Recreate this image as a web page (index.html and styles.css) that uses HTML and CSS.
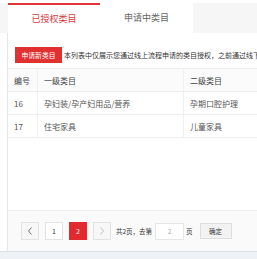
FILE: index.html
```html
<!DOCTYPE html>
<html>
<head>
<meta charset="utf-8">
<link rel="stylesheet" href="styles.css">
</head>
<body>
<div class="page">
  <div class="tabs">
    <div class="tab active">已授权类目</div>
    <div class="tab">申请中类目</div>
  </div>
  <div class="panel">
    <div class="toolbar">
      <button class="btn-apply">申请新类目</button>
      <span class="note">本列表中仅展示您通过线上流程申请的类目授权，之前通过线下申请的类目授权请联系对接人</span>
    </div>
    <table class="grid">
      <thead>
        <tr><th class="c1">编号</th><th class="c2">一级类目</th><th class="c3">二级类目</th></tr>
      </thead>
      <tbody>
        <tr><td class="c1">16</td><td class="c2">孕妇装/孕产妇用品/营养</td><td class="c3">孕期口腔护理</td></tr>
        <tr><td class="c1">17</td><td class="c2">住宅家具</td><td class="c3">儿童家具</td></tr>
      </tbody>
    </table>
    <div class="footer">
      <span class="pg arrow"><svg width="6" height="8" viewBox="0 0 6 8"><polyline points="4.5,0.5 1.5,4 4.5,7.5" fill="none" stroke="#666" stroke-width="0.9"/></svg></span>
      <span class="pg num">1</span>
      <span class="pg num cur">2</span>
      <span class="pg arrow dis"><svg width="6" height="8" viewBox="0 0 6 8"><polyline points="1.5,0.5 4.5,4 1.5,7.5" fill="none" stroke="#bbb" stroke-width="0.9"/></svg></span>
      <span class="total">共2页，去第</span>
      <span class="goto">2</span>
      <span class="unit">页</span>
      <span class="ok">确定</span>
    </div>
  </div>
</div>
</body>
</html>
```
FILE: styles.css
```css
html, body {
  margin: 0;
  padding: 0;
  overflow: hidden;
}
body {
  background: #eef1f6;
  font-family: "Noto Sans CJK SC", "Noto Sans", sans-serif;
  width: 257px;
  height: 259px;
}
.page {
  height: 252px;
  background: #fff;
  padding-top: 3px;
  box-sizing: border-box;
  border-bottom: 1px solid #dcdfe4;
  display: flex;
  flex-direction: column;
  width: 420px;
}
.tabs {
  display: flex;
  height: 30px;
  background: #f6f6f6;
  padding-left: 8px;
}
.tab {
  width: 92px;
  background: #fff;
  color: #666;
  font-size: 9px;
  text-align: center;
  line-height: 30px;
  box-sizing: border-box;
}
.tab + .tab { width: 93px; }
.tab.active {
  color: #d8383c;
  border-top: 2px solid #df3337;
  line-height: 28px;
}
.panel {
  flex: 1;
  margin-left: 7px;
  border-left: 1px solid #e6e6e6;
  display: flex;
  flex-direction: column;
}
.toolbar {
  display: flex;
  align-items: center;
  margin-top: 14px;
  padding-left: 7px;
  white-space: nowrap;
}
.btn-apply {
  height: 16px;
  width: 47px;
  padding: 0;
  border: 0;
  background: #e0302f;
  color: #fff;
  font-family: inherit;
  font-size: 6.8px;
  line-height: 16px;
}
.note {
  margin-left: 2px;
  font-size: 7px;
  color: #333;
}
.grid {
  margin-top: 5px;
  border-collapse: collapse;
  width: 410px;
  font-size: 8px;
  color: #555;
}
.grid th, .grid td {
  height: 22px;
  padding: 0 0 0 6px;
  text-align: left;
  font-weight: normal;
  border-top: 1px solid #eeeeee;
  border-bottom: 1px solid #eeeeee;
}
.grid th {
  background: #fbfbfb;
  color: #444;
}
.grid .c1 { width: 23px; }
.grid .c2 { width: 139px; border-left: 1px solid #f0f0f0; }
.grid .c3 { border-left: 1px solid #f0f0f0; }
.footer {
  margin-top: auto;
  height: 40px;
  background: #fafafa;
  border-top: 1px solid #efefef;
  display: flex;
  align-items: center;
  padding-left: 13px;
  font-size: 6.5px;
  color: #333;
}
.pg {
  width: 18px;
  height: 18px;
  box-sizing: border-box;
  border: 1px solid #e2e2e2;
  background: #fff;
  display: flex;
  align-items: center;
  justify-content: center;
  margin-right: 6px;
  font-size: 7px;
  color: #333;
}
.pg.arrow { background: #f7f7f7; }
.pg.cur {
  background: #e3282e;
  border-color: #e3282e;
  color: #fff;
}
.total { margin-left: -1px; }
.goto {
  margin-left: 3px;
  width: 29px;
  height: 17px;
  box-sizing: border-box;
  border: 1px solid #e6e6e6;
  background: #fff;
  color: #aaa;
  display: flex;
  align-items: center;
  justify-content: center;
}
.unit { margin-left: 2px; }
.ok {
  margin-left: 7px;
  width: 32px;
  height: 16px;
  box-sizing: border-box;
  border: 1px solid #dedede;
  background: #f2f2f2;
  display: flex;
  align-items: center;
  justify-content: center;
}
```
